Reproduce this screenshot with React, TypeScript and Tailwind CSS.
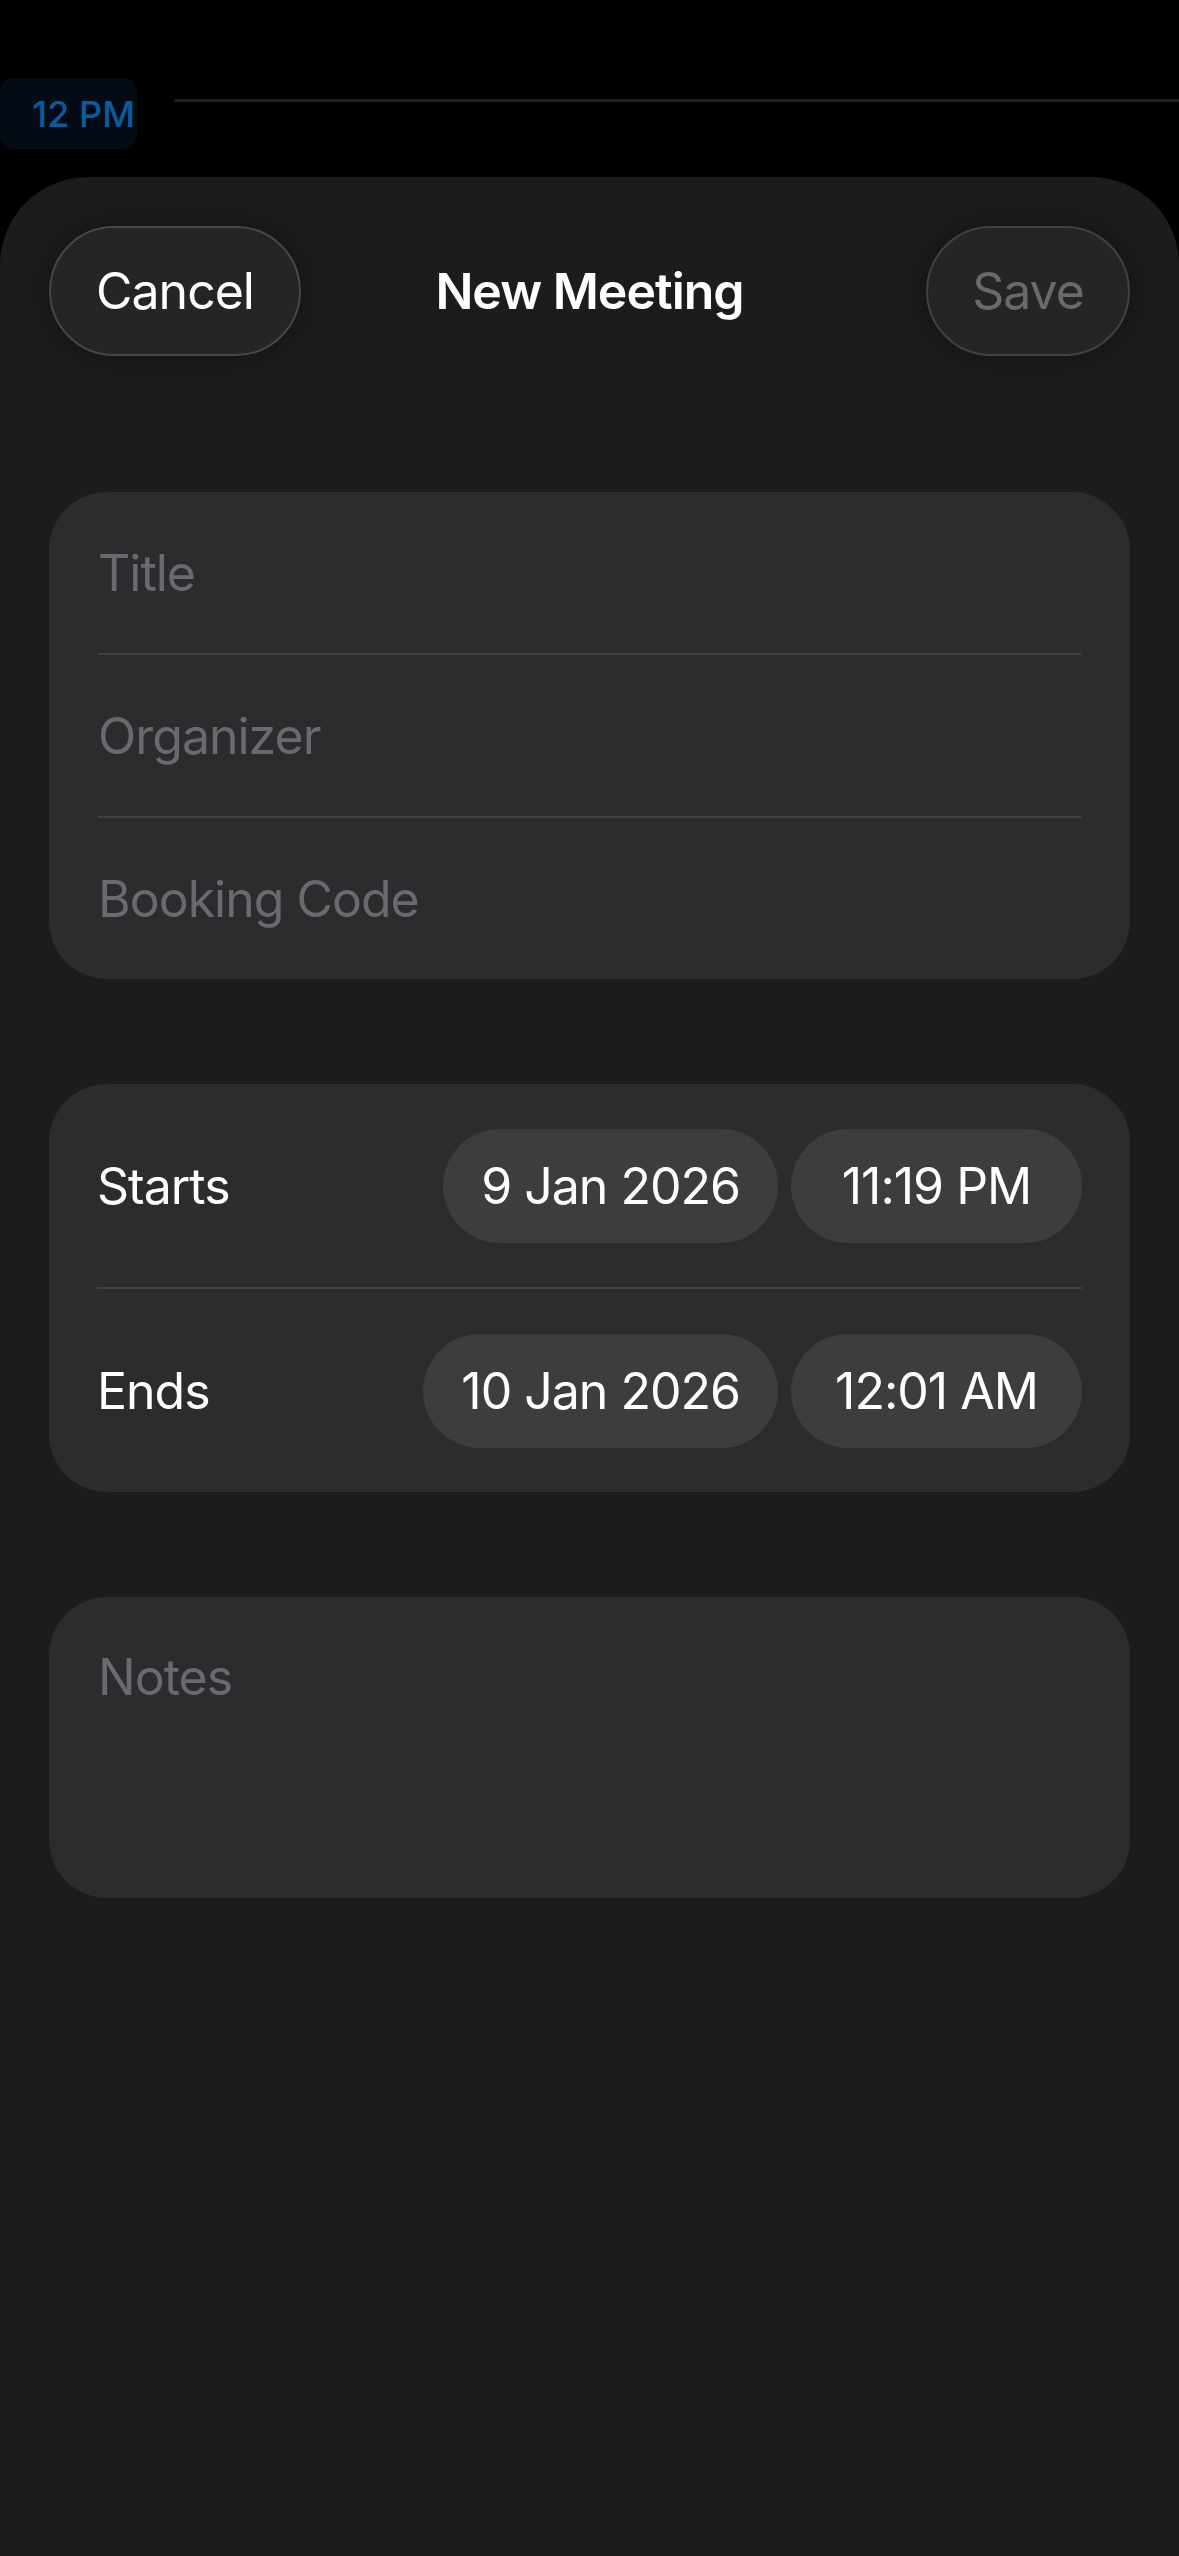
import React from 'react';

const font = "font-['Inter','Noto_Sans',sans-serif]";

function Divider() {
  return <div className="h-[2px] bg-[#424245]" />;
}

function Field({ label }: { label: string }) {
  return (
    <div className="flex h-[161px] items-center">
      <span className="text-[50px] leading-none tracking-[-1px] text-[#6a6a6e]">{label}</span>
    </div>
  );
}

function DateRow({ label, date, time }: { label: string; date: string; time: string }) {
  return (
    <div className="flex h-[203px] items-center justify-between">
      <span className="text-[50px] leading-none tracking-[-1px] text-white">{label}</span>
      <div className="flex items-center gap-[13px] text-[50px] leading-none tracking-[-1px] text-white">
        <div className="flex h-[114px] items-center rounded-full bg-[#3d3d40] px-[38px]">{date}</div>
        <div className="flex h-[114px] w-[291px] items-center justify-center rounded-full bg-[#3d3d40]">
          {time}
        </div>
      </div>
    </div>
  );
}

export default function App() {
  return (
    <div className={`min-h-screen bg-black ${font}`}>
      {/* calendar peeking behind the sheet */}
      <div className="flex h-[177px] items-start pt-[78px]">
        <div className="flex h-[71px] w-[137px] items-center justify-end rounded-[14px] bg-[#030b15] pr-[2px]">
          <span className="text-[36px] font-medium leading-none text-[#0b5a9e]">12 PM</span>
        </div>
        <div className="ml-[37px] mt-[21px] h-[3px] flex-1 bg-[#1e1e20]" />
      </div>

      {/* sheet */}
      <div className="min-h-[2379px] rounded-t-[88px] bg-[#1c1c1e] px-[49px] pt-[49px]">
        <div className="grid h-[130px] grid-cols-[1fr_auto_1fr] items-center">
          <div className="flex">
            <button className="flex h-[130px] w-[252px] items-center justify-center rounded-full border-2 border-[#47474a] bg-[#252527] text-[50px] leading-none tracking-[-1px] text-white shadow-[0_0_36px_rgba(0,0,0,0.35)]">
              Cancel
            </button>
          </div>
          <h1 className="text-[50px] font-semibold leading-none tracking-[-1px] text-white">New Meeting</h1>
          <div className="flex justify-end">
            <button className="flex h-[130px] w-[204px] items-center justify-center rounded-full border-2 border-[#424245] bg-[#252527] text-[50px] leading-none tracking-[-1px] text-[#6a6a6d] shadow-[0_0_36px_rgba(0,0,0,0.35)]">
              Save
            </button>
          </div>
        </div>

        <div className="mt-[136px] rounded-[58px] bg-[#2c2c2e] px-[49px]">
          <Field label="Title" />
          <Divider />
          <Field label="Organizer" />
          <Divider />
          <Field label="Booking Code" />
        </div>

        <div className="mt-[105px] rounded-[58px] bg-[#2c2c2e] px-[48px]">
          <DateRow label="Starts" date="9 Jan 2026" time="11:19 PM" />
          <Divider />
          <DateRow label="Ends" date="10 Jan 2026" time="12:01 AM" />
        </div>

        <div className="mt-[105px] h-[301px] rounded-[58px] bg-[#2c2c2e] px-[49px] pt-[50px]">
          <span className="text-[50px] leading-[60px] tracking-[-1px] text-[#6a6a6e]">Notes</span>
        </div>
      </div>
    </div>
  );
}
